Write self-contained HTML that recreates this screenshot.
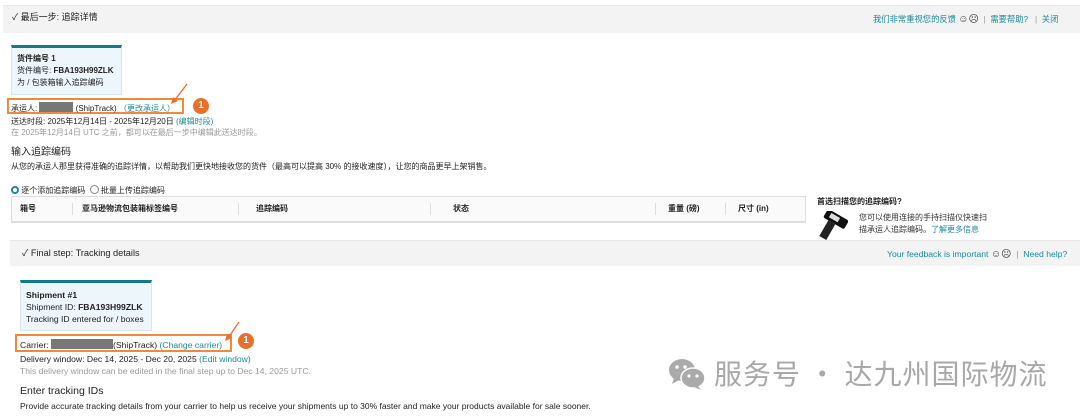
<!DOCTYPE html>
<html><head><meta charset="utf-8"><style>
*{margin:0;padding:0;box-sizing:border-box}
body{width:1080px;height:416px;overflow:hidden;background:#fff;font-family:"Liberation Sans","Noto Sans CJK SC",sans-serif;color:#222;position:relative}
.a{position:absolute;white-space:nowrap;line-height:1}
.s{font-size:8px}
.e{font-size:8.6px}
.t{color:#1a8a9a}
.g{color:#999}
.band{position:absolute;background:#f3f3f3;border-top:1px solid #e8e8e8}
.box{position:absolute;background:#edf6fb;border:1px solid #d6e6ee;border-top:3px solid #137a8a}
.ob{position:absolute;border:2px solid #f08a3a}
.circ{position:absolute;width:16px;height:16px;border-radius:50%;background:#e8702a;color:#fff;font-size:10px;font-weight:bold;text-align:center;line-height:16px}
.red{display:inline-block;background:#777;height:10px;vertical-align:-1px}
.sep{position:absolute;width:1px;background:#ddd}
</style></head><body>
<div class="band" style="left:3px;top:5px;width:1077px;height:28px"></div>
<div class="a" style="left:12px;top:13px;font-size:9px">✓ 最后一步: 追踪详情</div>
<div class="a t" style="left:873px;top:15px;font-size:8.3px">我们非常重视您的反馈 <span style="color:#333;font-size:10px">☺☹</span> &nbsp;<span class="g">|</span> &nbsp;需要帮助? &nbsp;&nbsp;<span class="g">|</span> &nbsp;关闭</div>

<div class="box" style="left:11px;top:45px;width:111px;height:50px"></div>
<div class="a s" style="left:17px;top:55px;font-weight:bold">货件编号 1</div>
<div class="a s" style="left:17px;top:67px">货件编号: <b>FBA193H99ZLK</b></div>
<div class="a s" style="left:17px;top:79px">为 / 包装箱输入追踪编码</div>

<div class="ob" style="left:7px;top:98px;width:177px;height:16px"></div>
<div class="a s" style="left:11px;top:102px">承运人: <span class="red" style="width:34px"></span> (ShipTrack) <span class="t">（更改承运人）</span></div>
<div class="circ" style="left:193px;top:98px">1</div>
<svg class="a" style="left:168px;top:82px" width="22" height="24"><line x1="19" y1="2" x2="6" y2="19" stroke="#e8702a" stroke-width="1.3"/><path d="M3 22 L5 15 L10 19 Z" fill="#e8702a"/></svg>

<div class="a s" style="left:11px;top:118px">送达时段: 2025年12月14日 - 2025年12月20日 <span class="t">(编辑时段)</span></div>
<div class="a s g" style="left:11px;top:129px">在 2025年12月14日 UTC 之前，都可以在最后一步中编辑此送达时段。</div>
<div class="a" style="left:11px;top:148px;font-size:10px">输入追踪编码</div>
<div class="a s" style="left:11px;top:163px">从您的承运人那里获得准确的追踪详情，以帮助我们更快地接收您的货件（最高可以提高 30% 的接收速度），让您的商品更早上架销售。</div>
<div class="a s" style="left:11px;top:185px"><span style="display:inline-block;width:8px;height:8px;border-radius:50%;border:2.5px solid #1a8a9a;vertical-align:-1px"></span> 逐个添加追踪编码 &nbsp;<span style="display:inline-block;width:9px;height:9px;border-radius:50%;border:1px solid #888;vertical-align:-1px"></span> 批量上传追踪编码</div>

<div style="position:absolute;left:11px;top:196px;width:795px;height:27px;background:#fafafa;border:1px solid #ddd;border-bottom:2px solid #ddd"></div>
<div class="sep" style="left:72px;top:203px;height:12px"></div>
<div class="sep" style="left:238px;top:203px;height:12px"></div>
<div class="sep" style="left:430px;top:203px;height:12px"></div>
<div class="sep" style="left:655px;top:203px;height:12px"></div>
<div class="sep" style="left:725px;top:203px;height:12px"></div>
<div class="a s" style="left:20px;top:205px;font-weight:bold">箱号</div>
<div class="a s" style="left:82px;top:205px;font-weight:bold">亚马逊物流包装箱标签编号</div>
<div class="a s" style="left:256px;top:205px;font-weight:bold">追踪编码</div>
<div class="a s" style="left:453px;top:205px;font-weight:bold">状态</div>
<div class="a s" style="left:668px;top:205px;font-weight:bold">重量 (磅)</div>
<div class="a s" style="left:738px;top:205px;font-weight:bold">尺寸 (in)</div>

<div class="a s" style="left:817px;top:198px;font-weight:bold">首选扫描您的追踪编码?</div>
<svg class="a" style="left:816px;top:211px" width="32" height="30"><g transform="rotate(30 16 15)"><rect x="4" y="2" width="24" height="10" rx="2" fill="#111"/><rect x="9" y="4" width="10" height="5" fill="#ddd"/><rect x="10" y="12" width="8" height="18" fill="#222"/></g></svg>
<div class="a s" style="left:859px;top:214px;color:#333">您可以使用连接的手持扫描仪快速扫</div>
<div class="a s" style="left:859px;top:226px;color:#333">描承运人追踪编码。<span class="t">了解更多信息</span></div>

<div class="band" style="left:10px;top:240px;width:1070px;height:26px"></div>
<div class="a" style="left:22px;top:249px;font-size:9.2px">✓ Final step: Tracking details</div>
<div class="a e t" style="left:887px;top:250px">Your feedback is important <span style="color:#333;font-size:10px">☺☹</span> &nbsp;<span class="g">|</span>&nbsp; Need help?</div>

<div class="box" style="left:20px;top:280px;width:132px;height:51px"></div>
<div class="a e" style="left:26px;top:291px;font-weight:bold">Shipment #1</div>
<div class="a e" style="left:26px;top:303px">Shipment ID: <b>FBA193H99ZLK</b></div>
<div class="a e" style="left:26px;top:315px">Tracking ID entered for / boxes</div>

<div class="ob" style="left:15px;top:334px;width:217px;height:18px"></div>
<div class="a e" style="left:20px;top:339px">Carrier: <span class="red" style="width:62px"></span>(ShipTrack) <span class="t">(Change carrier)</span></div>
<div class="circ" style="left:238px;top:333px">1</div>
<svg class="a" style="left:222px;top:320px" width="20" height="24"><line x1="17" y1="2" x2="6" y2="18" stroke="#e8702a" stroke-width="1.3"/><path d="M3 21 L5 14 L10 18 Z" fill="#e8702a"/></svg>

<div class="a e" style="left:20px;top:355px">Delivery window: Dec 14, 2025 - Dec 20, 2025 <span class="t">(Edit window)</span></div>
<div class="a e g" style="left:20px;top:367px">This delivery window can be edited in the final step up to Dec 14, 2025 UTC.</div>
<div class="a" style="left:20px;top:386px;font-size:10.5px">Enter tracking IDs</div>
<div class="a" style="left:20px;top:402px;font-size:8.5px">Provide accurate tracking details from your carrier to help us receive your shipments up to 30% faster and make your products available for sale sooner.</div>

<svg class="a" style="left:666px;top:356px" width="42" height="34"><ellipse cx="16" cy="14" rx="13" ry="11" fill="#aaa"/><path d="M8 22 L6 28 L13 24Z" fill="#aaa"/><ellipse cx="27" cy="22" rx="12" ry="10" fill="#aaa" stroke="#fff" stroke-width="1.5"/><path d="M32 30 L35 34 L28 31Z" fill="#aaa"/><circle cx="11" cy="11" r="1.8" fill="#fff"/><circle cx="19" cy="11" r="1.8" fill="#fff"/><circle cx="23" cy="20" r="1.6" fill="#fff"/><circle cx="31" cy="20" r="1.6" fill="#fff"/></svg>
<div class="a" style="left:714px;top:359px;font-size:28px;letter-spacing:1px;color:#a8a8a8;font-family:'Noto Sans CJK SC',sans-serif">服务号 · 达九州国际物流</div>
</body></html>
